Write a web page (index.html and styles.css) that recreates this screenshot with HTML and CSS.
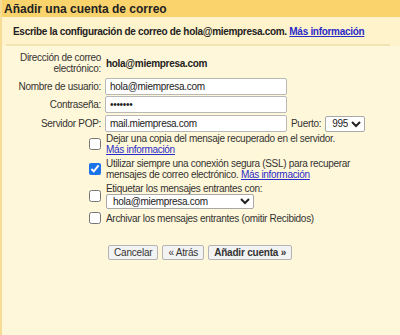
FILE: index.html
```html
<!DOCTYPE html>
<html lang="es">
<head>
<meta charset="utf-8">
<title>Añadir una cuenta de correo</title>
<link rel="stylesheet" href="styles.css">
</head>
<body>
<div class="page">
  <div class="titlebar">Añadir una cuenta de correo</div>
  <div class="intro">
    <p>Escribe la configuración de correo de hola@miempresa.com. <a href="#">Más información</a></p>
  </div>

  <form class="account">
    <div class="fields">
      <label class="lbl lbl-two">Dirección de correo<br>electrónico:</label>
      <div class="value">hola@miempresa.com</div>

      <label class="lbl">Nombre de usuario:</label>
      <div><input class="txt" type="text" value="hola@miempresa.com"></div>

      <label class="lbl">Contraseña:</label>
      <div><input class="txt" type="password" value="1234567"></div>

      <label class="lbl">Servidor POP:</label>
      <div class="server">
        <input class="txt" type="text" value="mail.miempresa.com">
        <span class="port-lbl">Puerto:</span>
        <select class="sel port"><option>995</option></select>
      </div>
    </div>

    <div class="options">
      <div class="box"><input type="checkbox"></div>
      <div class="opt">Dejar una copia del mensaje recuperado en el servidor.<br><a href="#">Más información</a></div>

      <div class="box"><input type="checkbox" checked></div>
      <div class="opt">Utilizar siempre una conexión segura (SSL) para recuperar mensajes de correo electrónico. <a href="#">Más información</a></div>

      <div class="box"><input type="checkbox"></div>
      <div class="opt">Etiquetar los mensajes entrantes con:<br>
        <select class="sel label-sel"><option>hola@miempresa.com</option></select>
      </div>

      <div class="box"><input type="checkbox"></div>
      <div class="opt">Archivar los mensajes entrantes (omitir Recibidos)</div>
    </div>

    <div class="actions">
      <button type="button" class="btn">Cancelar</button>
      <button type="button" class="btn">« Atrás</button>
      <button type="button" class="btn btn-main">Añadir cuenta »</button>
    </div>
  </form>
</div>
</body>
</html>
```

FILE: styles.css
```css
html, body {
    margin: 0;
    height: 100%;
}
body {
    background: #fff7d9;
    font-family: "Liberation Sans", Arial, sans-serif;
    font-size: 10px;
    letter-spacing: -0.3px;
    color: #222;
}
.page {
    min-height: 100%;
    border-left: 2px solid #f6dc94;
    box-sizing: border-box;
}
.titlebar {
    background: #fad36d;
    height: 17px;
    line-height: 18px;
    padding-left: 2px;
    font-size: 12px;
    letter-spacing: 0;
    font-weight: bold;
    color: #222;
}
.intro {
    background: #fff3cb;
    padding: 0 10px 0 4px;
}
.intro p {
    margin: 0;
    padding: 9px 0 7px 7px;
    line-height: 11px;
    font-weight: bold;
    border-bottom: 2px solid #f1e3b4;
}
a {
    color: #2a2ac8;
    text-decoration: underline;
}

/* form */
.account {
    padding-top: 6px;
}
.fields {
    display: grid;
    grid-template-columns: 99px 1fr;
    column-gap: 4px;
    row-gap: 1px;
    align-items: center;
}
.lbl {
    text-align: right;
    color: #333;
}
.lbl-two {
    line-height: 11px;
    height: 22px;
    margin-bottom: 3px;
}
.value {
    font-weight: bold;
    padding-left: 1px;
    margin-bottom: 3px;
}
.txt {
    width: 182px;
    height: 17px;
    box-sizing: border-box;
    border: 1px solid #b8b8b8;
    border-radius: 2px;
    background: #fff;
    font: 10px "Liberation Sans", Arial, sans-serif;
    letter-spacing: -0.3px;
    padding: 0 4px;
    margin: 0;
    display: block;
    color: #222;
}
.server {
    display: flex;
    align-items: center;
    margin-top: 1px;
}
.port-lbl {
    margin: 0 4px;
    color: #333;
}
.sel {
    height: 16px;
    box-sizing: border-box;
    border: 1px solid #a8a8a8;
    border-radius: 2px;
    background: #fff;
    font: 10px "Liberation Sans", Arial, sans-serif;
    letter-spacing: -0.3px;
    color: #222;
    padding: 0 0 0 2px;
    margin: 0;
}
.port {
    width: 40px;
}
.label-sel {
    display: block;
    width: 148px;
    height: 15px;
    margin-top: 0;
}

.options {
    display: grid;
    grid-template-columns: 100px 1fr;
    column-gap: 4px;
    row-gap: 3px;
    align-items: center;
    margin-top: 1px;
    padding-right: 36px;
}
.box {
    display: flex;
    justify-content: flex-end;
}
.box input {
    width: 12px;
    height: 12px;
    margin: 0 1px 0 0;
    accent-color: #1a73e8;
}
.opt {
    line-height: 11px;
    color: #333;
}

.actions {
    display: flex;
    gap: 4px;
    padding: 21px 0 0 106px;
}
.btn {
    height: 15px;
    border: 1px solid #b4b4b4;
    border-radius: 2px;
    background: #f3f3f3;
    font: 10px "Liberation Sans", Arial, sans-serif;
    letter-spacing: -0.2px;
    color: #333;
    padding: 0 5px;
}
.btn-main {
    font-weight: bold;
}
```
